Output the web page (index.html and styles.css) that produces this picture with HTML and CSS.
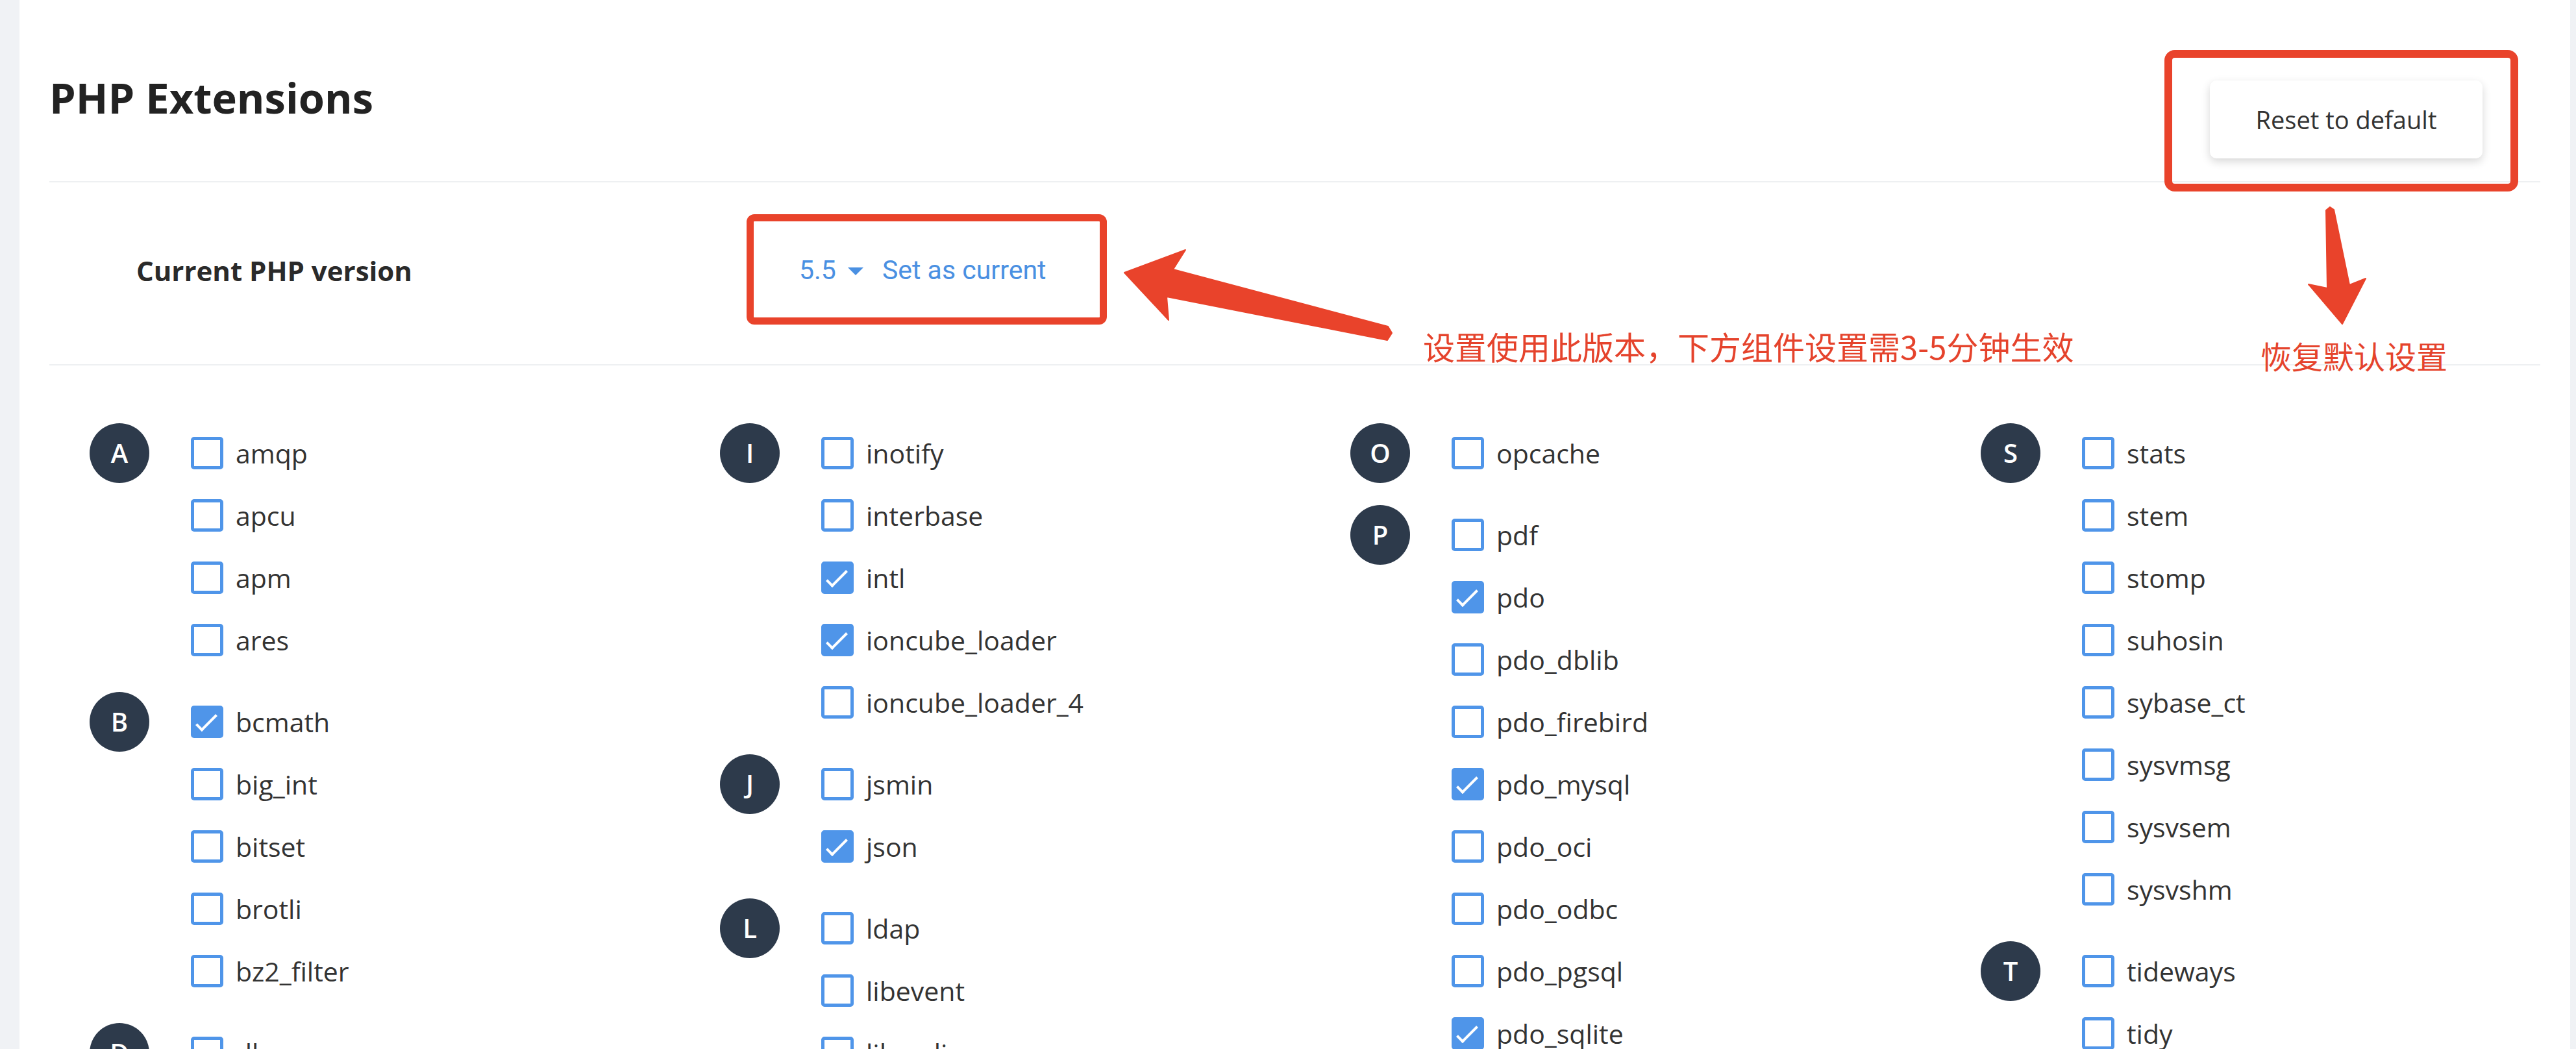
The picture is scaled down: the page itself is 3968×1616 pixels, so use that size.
FILE: index.html
```html
<!DOCTYPE html>
<html lang="en">
<head>
<meta charset="UTF-8">
<meta name="viewport" content="width=device-width, initial-scale=1.0">
<title>PHP Extensions</title>
<link rel="stylesheet" href="styles.css">
</head>
<body>
<div class="panel">
    <div class="panel-head">
        <h1>PHP Extensions</h1>
        <button class="reset-button">Reset to default</button>
    </div>

    <div class="version-row">
        <div class="version-label">Current PHP version</div>
        <div class="version-picker">
            <span class="version">5.5</span>
            <span class="caret"></span>
            <a href="#" class="set-current">Set as current</a>
        </div>
    </div>

    <div class="ext-grid">
        <div class="ext-col">
            <div class="ext-group">
                <div class="letter">A</div>
                <ul>
                    <li><span class="box"></span>amqp</li>
                    <li><span class="box"></span>apcu</li>
                    <li><span class="box"></span>apm</li>
                    <li><span class="box"></span>ares</li>
                </ul>
            </div>
            <div class="ext-group">
                <div class="letter">B</div>
                <ul>
                    <li><span class="box on"></span>bcmath</li>
                    <li><span class="box"></span>big_int</li>
                    <li><span class="box"></span>bitset</li>
                    <li><span class="box"></span>brotli</li>
                    <li><span class="box"></span>bz2_filter</li>
                </ul>
            </div>
            <div class="ext-group">
                <div class="letter">D</div>
                <ul>
                    <li><span class="box"></span>dba</li>
                    <li><span class="box"></span>dbase</li>
                </ul>
            </div>
        </div>

        <div class="ext-col">
            <div class="ext-group">
                <div class="letter">I</div>
                <ul>
                    <li><span class="box"></span>inotify</li>
                    <li><span class="box"></span>interbase</li>
                    <li><span class="box on"></span>intl</li>
                    <li><span class="box on"></span>ioncube_loader</li>
                    <li><span class="box"></span>ioncube_loader_4</li>
                </ul>
            </div>
            <div class="ext-group">
                <div class="letter">J</div>
                <ul>
                    <li><span class="box"></span>jsmin</li>
                    <li><span class="box on"></span>json</li>
                </ul>
            </div>
            <div class="ext-group">
                <div class="letter">L</div>
                <ul>
                    <li><span class="box"></span>ldap</li>
                    <li><span class="box"></span>libevent</li>
                    <li><span class="box"></span>libsodium</li>
                    <li><span class="box"></span>lua</li>
                </ul>
            </div>
        </div>

        <div class="ext-col">
            <div class="ext-group">
                <div class="letter">O</div>
                <ul>
                    <li><span class="box"></span>opcache</li>
                </ul>
            </div>
            <div class="ext-group">
                <div class="letter">P</div>
                <ul>
                    <li><span class="box"></span>pdf</li>
                    <li><span class="box on"></span>pdo</li>
                    <li><span class="box"></span>pdo_dblib</li>
                    <li><span class="box"></span>pdo_firebird</li>
                    <li><span class="box on"></span>pdo_mysql</li>
                    <li><span class="box"></span>pdo_oci</li>
                    <li><span class="box"></span>pdo_odbc</li>
                    <li><span class="box"></span>pdo_pgsql</li>
                    <li><span class="box on"></span>pdo_sqlite</li>
                    <li><span class="box"></span>pgsql</li>
                </ul>
            </div>
        </div>

        <div class="ext-col">
            <div class="ext-group">
                <div class="letter">S</div>
                <ul>
                    <li><span class="box"></span>stats</li>
                    <li><span class="box"></span>stem</li>
                    <li><span class="box"></span>stomp</li>
                    <li><span class="box"></span>suhosin</li>
                    <li><span class="box"></span>sybase_ct</li>
                    <li><span class="box"></span>sysvmsg</li>
                    <li><span class="box"></span>sysvsem</li>
                    <li><span class="box"></span>sysvshm</li>
                </ul>
            </div>
            <div class="ext-group">
                <div class="letter">T</div>
                <ul>
                    <li><span class="box"></span>tideways</li>
                    <li><span class="box"></span>tidy</li>
                    <li><span class="box"></span>timezonedb</li>
                </ul>
            </div>
        </div>
    </div>

    <!-- annotations drawn over the screenshot -->
    <div class="mark mark-version"></div>
    <div class="mark mark-reset"></div>
    <svg class="arrows" viewBox="0 0 3968 1616" width="3968" height="1616">
        <polygon points="1732,420 1826,385 1807,415 2138,503 2144,513 2137,524 1797,457 1800,493" />
        <polygon points="3583,324 3589,319 3595,323 3619,439 3644,429 3608,499 3556,438 3585,444" />
    </svg>
    <div class="note note-version">设置使用此版本，下方组件设置需3-5分钟生效</div>
    <div class="note note-reset">恢复默认设置</div>
</div>
</body>
</html>
```

FILE: styles.css
```css
html, body {
    margin: 0;
    padding: 0;
}

body {
    height: 1616px;
    overflow: hidden;
    background-color: #f0f2f5;
    padding: 0 9px 0 30px;
    font-family: "Open Sans", "Noto Sans", sans-serif;
    color: #333;
}

.panel {
    position: relative;
    height: 1616px;
    background-color: #fff;
    padding: 0 46px;
}

.panel-head {
    display: flex;
    justify-content: space-between;
    align-items: flex-start;
    padding: 116px 89px 35px 0;
    border-bottom: 2px solid #eef0f2;
}

.panel-head h1 {
    margin: 0;
    font-size: 65px;
    line-height: 68px;
    font-weight: 700;
    color: #222;
}

.reset-button {
    margin-top: 8px;
    width: 420px;
    height: 120px;
    border: none;
    border-radius: 10px;
    background-color: #fff;
    box-shadow: 0 5px 14px rgba(0, 0, 0, 0.16);
    font-family: "Open Sans", sans-serif;
    font-size: 38px;
    color: #333;
}

.version-row {
    display: flex;
    align-items: center;
    height: 280px;
    border-bottom: 2px solid #eef0f2;
}

.version-label {
    width: 1021px;
    padding-left: 134px;
    margin-bottom: 10px;
    font-size: 42px;
    font-weight: 700;
    color: #2a2a2a;
}

.version-picker {
    display: flex;
    align-items: center;
    margin-bottom: 10px;
    font-family: Roboto, "Liberation Sans", sans-serif;
    font-size: 41px;
    color: #4a90e2;
}

.caret {
    width: 0;
    height: 0;
    margin: 4px 29px 0 18px;
    border-left: 12px solid transparent;
    border-right: 12px solid transparent;
    border-top: 12px solid #4a90e2;
}

.set-current {
    color: #4a90e2;
    text-decoration: none;
}

.ext-grid {
    display: grid;
    grid-template-columns: 971px 971px 971px 1fr;
    padding: 87px 0 0 62px;
}

.ext-group {
    display: flex;
    align-items: flex-start;
    margin-bottom: 30px;
}

.letter {
    flex: none;
    width: 92px;
    height: 92px;
    margin: 2px 64px 0 0;
    border-radius: 50%;
    background-color: #2d3a4b;
    color: #fff;
    font-size: 40px;
    font-weight: 600;
    line-height: 92px;
    text-align: center;
}

.ext-group ul {
    margin: 0;
    padding: 0;
    list-style: none;
}

.ext-group li {
    display: flex;
    align-items: center;
    height: 96px;
    font-size: 41px;
    color: #333;
}

.box {
    position: relative;
    flex: none;
    box-sizing: border-box;
    width: 50px;
    height: 50px;
    margin-right: 19px;
    border: 5px solid #4f95e9;
    border-radius: 5px;
    background-color: #fff;
}

.box.on {
    background-color: #4f95e9;
}

.box.on::after {
    content: "";
    position: absolute;
    left: 12px;
    top: 1px;
    box-sizing: border-box;
    width: 14px;
    height: 34px;
    border-right: 4px solid #fff;
    border-bottom: 4px solid #fff;
    transform: rotate(45deg);
}

.mark {
    position: absolute;
    box-sizing: border-box;
    border: 11px solid #e9432b;
}

.mark-version {
    left: 1120px;
    top: 330px;
    width: 555px;
    height: 170px;
    border-radius: 12px;
}

.mark-reset {
    left: 3304px;
    top: 77px;
    width: 545px;
    height: 218px;
    border-width: 12px;
    border-radius: 16px;
}

.arrows {
    position: absolute;
    left: -30px;
    top: 0;
    pointer-events: none;
}

.arrows polygon {
    fill: #e9432b;
    stroke: #e9432b;
    stroke-width: 2;
    stroke-linejoin: round;
}

.note {
    position: absolute;
    font-family: "Noto Sans CJK SC", sans-serif;
    line-height: 1;
    color: #e5432c;
    white-space: nowrap;
}

.note-version {
    left: 2162px;
    top: 508px;
    font-size: 49px;
}

.note-reset {
    left: 3452px;
    top: 523px;
    font-size: 48px;
}
```
